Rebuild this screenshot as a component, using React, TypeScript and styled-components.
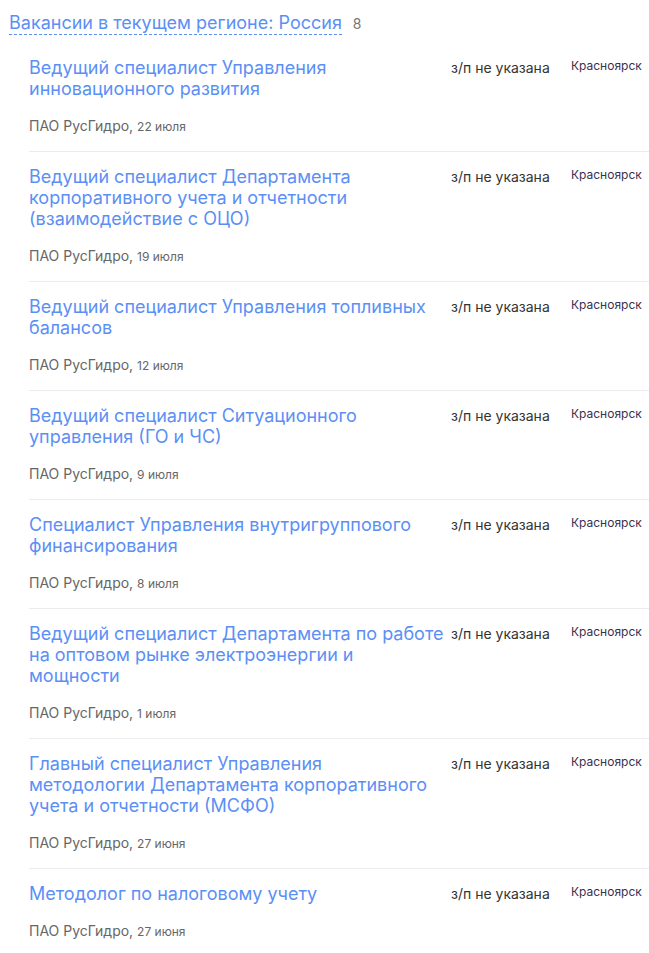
import React from 'react';
import styled, { createGlobalStyle } from 'styled-components';

const GlobalStyle = createGlobalStyle`
  html, body {
    margin: 0;
    padding: 0;
    background: #fff;
    font-family: Inter, "Noto Sans", Arial, sans-serif;
  }
`;

const Page = styled.div`
  width: 649px;
  padding-top: 12px;
`;

const Header = styled.div`
  display: flex;
  align-items: baseline;
  padding-left: 9px;
  margin-bottom: 7px;
`;

const RegionLink = styled.a`
  font-size: 18px;
  line-height: 22px;
  color: #5c8ff5;
  text-decoration: none;
  border-bottom: 1px dashed #5c8ff5;
  cursor: pointer;
`;

const Count = styled.span`
  margin-left: 11px;
  font-size: 14px;
  color: #777;
`;

const List = styled.div`
  margin-left: 29px;
`;

const Item = styled.div<{ $first?: boolean }>`
  display: grid;
  grid-template-columns: 422px 120px 1fr;
  padding: 14px 0 16px;
  border-top: 1px solid ${({ $first }) => ($first ? 'transparent' : '#ececf0')};
`;

const Main = styled.div`
  padding-right: 4px;
`;

const Title = styled.a`
  display: block;
  font-size: 18px;
  line-height: 21px;
  color: #5c8ff5;
  text-decoration: none;
  white-space: pre-line;
  cursor: pointer;
`;

const Meta = styled.div`
  margin-top: 19px;
  font-size: 14px;
  line-height: 16px;
  color: #666;
`;

const Date = styled.span`
  font-size: 12px;
`;

const Salary = styled.div`
  font-size: 14px;
  line-height: 21px;
  color: #333;
`;

const City = styled.div`
  font-size: 12px;
  line-height: 17px;
  color: #3b2f52;
`;

const vacancies = [
  { title: 'Ведущий специалист Управления инновационного развития', date: '22 июля' },
  {
    title: 'Ведущий специалист Департамента корпоративного учета и отчетности (взаимодействие с ОЦО)',
    date: '19 июля',
  },
  { title: 'Ведущий специалист Управления топливных балансов', date: '12 июля' },
  { title: 'Ведущий специалист Ситуационного управления (ГО и ЧС)', date: '9 июля' },
  { title: 'Специалист Управления внутригруппового финансирования', date: '8 июля' },
  {
    title: 'Ведущий специалист Департамента по работе на оптовом рынке электроэнергии и мощности',
    date: '1 июля',
  },
  {
    title: 'Главный специалист Управления\nметодологии Департамента корпоративного учета и отчетности (МСФО)',
    date: '27 июня',
  },
  { title: 'Методолог по налоговому учету', date: '27 июня' },
];

const App = () => (
  <>
    <GlobalStyle />
    <Page>
      <Header>
        <RegionLink>Вакансии в текущем регионе: Россия</RegionLink>
        <Count>{vacancies.length}</Count>
      </Header>
      <List>
        {vacancies.map((v, i) => (
          <Item key={i} $first={i === 0}>
            <Main>
              <Title>{v.title}</Title>
              <Meta>
                ПАО РусГидро, <Date>{v.date}</Date>
              </Meta>
            </Main>
            <Salary>з/п не указана</Salary>
            <City>Красноярск</City>
          </Item>
        ))}
      </List>
    </Page>
  </>
);

export default App;
